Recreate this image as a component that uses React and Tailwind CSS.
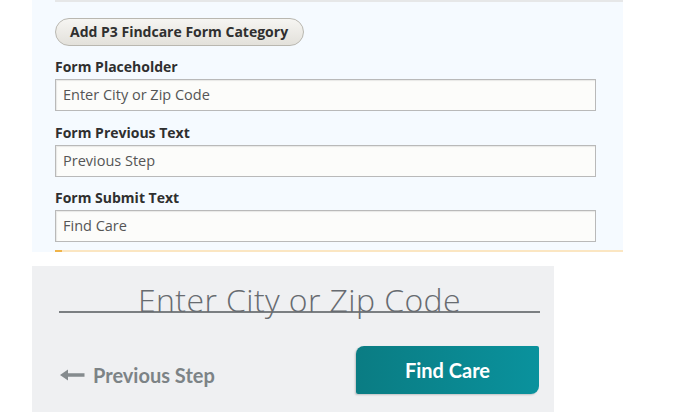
import React from 'react';

const fields = [
    { label: 'Form Placeholder', value: 'Enter City or Zip Code', mt: 'mt-[13px]' },
    { label: 'Form Previous Text', value: 'Previous Step', mt: 'mt-[14px]' },
    { label: 'Form Submit Text', value: 'Find Care', mt: 'mt-[13px]' },
];

const ArrowLeft = () => (
    <svg width="25" height="12" viewBox="0 0 25 12" className="shrink-0">
        <path d="M0 6 L8 0.5 L8 4.3 L24.5 4.3 L24.5 7.7 L8 7.7 L8 11.5 Z" fill="#858b8e" />
    </svg>
);

const App = () => {
    return (
        <div className="w-[681px] h-[412px] bg-white overflow-hidden">
            {/* admin settings panel */}
            <div className="ml-[32px] w-[591px] h-[252px] bg-[#f5faff] flex flex-col font-['Open_Sans',sans-serif]">
                <div className="ml-[23px] h-[2px] bg-[#e6e7e8]" />
                <button className="ml-[23px] mt-[16px] w-[249px] h-[28px] rounded-full border border-[#b9b7b0] bg-gradient-to-b from-[#f6f5f2] to-[#e3e1db] text-[14px] font-bold text-[#2f2f2f] text-left pl-[14px] leading-none">
                    Add P3 Findcare Form Category
                </button>

                {fields.map((f, i) => (
                    <div key={i} className={`${f.mt} ml-[23px] flex flex-col gap-[4px]`}>
                        <label className="text-[14px] leading-[16px] font-bold text-[#2f2f2f]">{f.label}</label>
                        <div className="w-[541px] h-[32px] border border-[#b9b9b9] shadow-[inset_1px_1px_1px_rgba(0,0,0,0.08)] bg-[#fcfcfa] flex items-center pl-[7px] text-[14.5px] text-[#555]">
                            {f.value}
                        </div>
                    </div>
                ))}

                <div className="mt-auto ml-[23px] h-[2px] flex">
                    <div className="w-[7px] bg-[#f0b44a]" />
                    <div className="flex-1 bg-[#fbe6c2]" />
                </div>
            </div>

            {/* live preview */}
            <div className="mt-[14px] ml-[32px] w-[522px] h-[146px] bg-[#eff0f2] pl-[27px] pr-[14px] flex flex-col">
                <div className="h-[47px] border-b-2 border-[#7b7f82] flex items-end justify-center">
                    <span className="text-[32px] leading-[22px] font-light tracking-[0.4px] text-[#676b70] font-['Open_Sans',sans-serif]">
                        Enter City or Zip Code
                    </span>
                </div>
                <div className="mt-[33px] flex items-center justify-between font-['Lato',sans-serif]">
                    <div className="flex items-center gap-[8px] pt-[9px] pl-px">
                        <ArrowLeft />
                        <span className="text-[20px] font-bold text-[#7c8386]">Previous Step</span>
                    </div>
                    <button className="mr-px w-[183px] h-[48px] rounded-tl-[8px] rounded-br-[8px] rounded-tr-[2px] rounded-bl-[2px] bg-gradient-to-r from-[#0a7c83] to-[#0a929d] shadow-[-1px_1px_2px_rgba(0,0,0,0.2)] text-white text-[20px] font-bold">
                        Find Care
                    </button>
                </div>
            </div>
        </div>
    );
};

export default App;
